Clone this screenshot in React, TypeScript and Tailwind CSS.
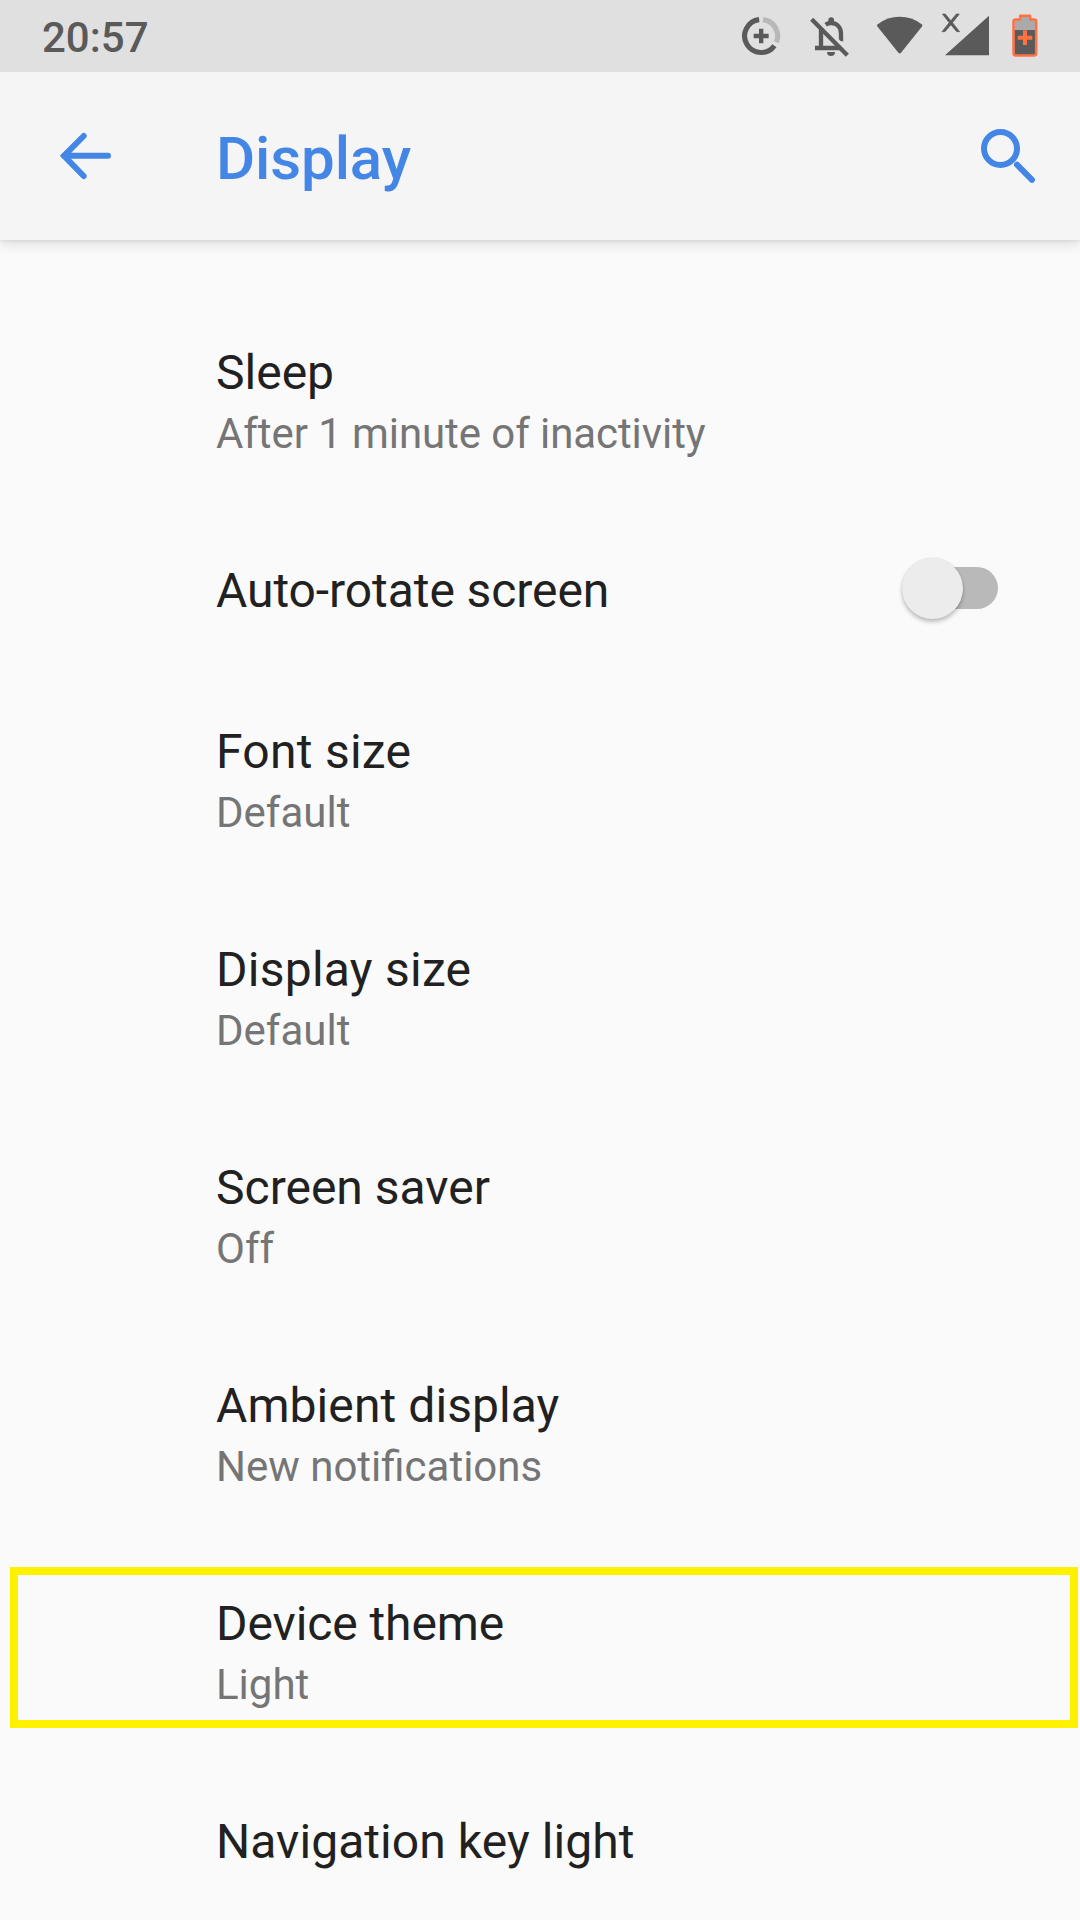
import React from 'react';

interface Setting {
  title: string;
  summary?: string;
  toggle?: boolean;
  highlighted?: boolean;
  titleClass?: string;
  summaryClass?: string;
}

const settings: Setting[] = [
  { title: 'Sleep', summary: 'After 1 minute of inactivity', summaryClass: 'tracking-[-0.08px]' },
  { title: 'Auto-rotate screen', toggle: true, titleClass: 'tracking-[-0.07px]' },
  { title: 'Font size', summary: 'Default', titleClass: 'tracking-[0.27px]' },
  { title: 'Display size', summary: 'Default', titleClass: 'tracking-[0.25px]' },
  { title: 'Screen saver', summary: 'Off' },
  { title: 'Ambient display', summary: 'New notifications', titleClass: 'tracking-[0.08px]' },
  { title: 'Device theme', summary: 'Light', titleClass: 'tracking-[-0.08px]', highlighted: true },
  { title: 'Navigation key light', titleClass: 'tracking-[0.06px]' },
];

const DataSaverIcon = () => (
  <svg viewBox="54 39 138 138" className="h-[46px] w-[46px]" fill="none" stroke="#5a5a5a" strokeWidth="15.500">
    <path d="M129 58.900A49.500 49.500 0 0 1 169.200 127" stroke="#b8b8b8" />
    <path d="M117.500 58.800A49.500 49.500 0 1 0 163.300 137.200" />
    <path d="M101 108H146M123.500 86V130" strokeWidth="13" />
  </svg>
);

const BellOffIcon = () => (
  <svg viewBox="252 0 150 216" className="h-[72px] w-[50px]" fill="none" stroke="#5a5a5a" strokeWidth="13">
    <path d="M303 88V143M285 144H362" />
    <path d="M317 74Q324 69 333 69C352 69 363 83 363 101V124" />
    <path d="M325 68V60A8.500 8.500 0 0 1 342 60V68Z" fill="#5a5a5a" stroke="none" />
    <path d="M321 156H345A12 12 0 0 1 321 156Z" fill="#5a5a5a" stroke="none" />
    {/* Cut-out that keeps the slash clear of the bell */}
    <path d="M284 51L390 158" stroke="#e0e0e0" strokeWidth="9" />
    <path d="M275 58L382 166" />
  </svg>
);

const WifiIcon = () => (
  <svg viewBox="874 0 52 72" className="h-[72px] w-[52px]" fill="#5a5a5a">
    <path d="M877.400 26.600Q876.500 25.200 877.800 24.200Q887.500 16.800 899.700 16.800Q911.900 16.800 921.600 24.200Q922.900 25.200 922 26.600L901 52.800Q899.700 54.200 898.400 52.800Z" />
  </svg>
);

const SignalIcon = () => (
  <svg viewBox="120 0 150 216" className="h-[72px] w-[50px]" fill="#5a5a5a">
    <path d="M267 47V166H135Z" />
    <path d="M127 42H136L152.500 62L169 42H178L157.500 68L179 95H170L152.500 74L135 95H126L147.500 68Z" stroke="#5a5a5a" strokeWidth="2" />
  </svg>
);

const BatteryIcon = () => (
  <svg viewBox="330 0 90 216" className="h-[72px] w-[30px]">
    <path d="M343 60H360V47H391V60H407V91H343Z" fill="#aaaaaa" />
    <path d="M343 90H407V165H343Z" fill="#5a5a5a" />
    <path d="M360.500 47H390.500V58.500H402Q408.500 58.500 408.500 65V160Q408.500 166.500 402 166.500H347Q340.500 166.500 340.500 160V65Q340.500 58.500 347 58.500H360.500Z" fill="none" stroke="#ff7043" strokeWidth="7.500" strokeLinejoin="round" />
    <path d="M353 113H397M375 91V135" fill="none" stroke="#ff7043" strokeWidth="12" />
  </svg>
);

const BackIcon = () => (
  <svg viewBox="174 390 168 156" className="h-[52px] w-[56px]" fill="none" stroke="#4486e5" strokeWidth="18" strokeLinecap="round">
    <path d="M324 467.500H193" />
    <path d="M251 408L192 467.500L251 528" strokeLinejoin="miter" />
  </svg>
);

const SearchIcon = () => (
  <svg viewBox="117 81 174 174" className="h-[58px] w-[58px]" fill="none" stroke="#4486e5" strokeWidth="18">
    <circle cx="181.500" cy="145.500" r="49.500" />
    <path d="M231 194L276 239.500" strokeLinecap="round" />
  </svg>
);

const Switch = () => (
  <div className="relative -mt-0.5 flex h-[61px] w-24 items-center self-start">
    <div className="ml-3 h-[42px] flex-1 rounded-full bg-[#b9b9b9]" />
    <div className="absolute left-0 top-px h-[61px] w-[61px] rounded-full bg-[#ececec] shadow-[0_3px_4px_rgba(0,0,0,0.24),0_0_2px_rgba(0,0,0,0.1)]" />
  </div>
);

const SettingRow: React.FC<Setting> = ({ title, summary, toggle, highlighted, titleClass = '', summaryClass = '' }) => (
  <div className={`relative flex shrink-0 items-center justify-between pt-12 pl-[216px] pr-[82px] ${toggle ? 'pb-[49px]' : 'pb-12'}`}>
    <div>
      <div className={`text-[48px] leading-[64px] text-[#212121] ${titleClass}`}>{title}</div>
      {summary && <div className={`text-[42px] leading-[58px] text-[#757575] ${summaryClass}`}>{summary}</div>}
    </div>
    {toggle && <Switch />}
    {highlighted && <div className="absolute left-[10px] top-[23px] h-[161px] w-[1068px] border-8 border-[#fff200]" />}
  </div>
);

export default function App() {
  return (
    <div className="flex h-[1920px] w-[1080px] flex-col overflow-hidden bg-[#fafafa] font-[Roboto,sans-serif]">
      <div className="z-20 flex h-[72px] shrink-0 items-center bg-[#e0e0e0] pl-[42px] pr-10">
        <span className="pt-[3px] text-[42px] font-medium leading-[69px] text-[#5a5a5a]">20:57</span>
        <div className="ml-auto flex items-center">
          <DataSaverIcon />
          <div className="ml-5"><BellOffIcon /></div>
          <div className="ml-5"><WifiIcon /></div>
          <div className="ml-3.5"><SignalIcon /></div>
          <div className="ml-5"><BatteryIcon /></div>
        </div>
      </div>

      <header className="z-10 flex h-[168px] shrink-0 items-center bg-[#f5f5f5] pl-[58px] pr-[43px] shadow-[0_3px_12px_rgba(0,0,0,0.14),0_1px_3px_rgba(0,0,0,0.06)]">
        <BackIcon />
        <h1 className="ml-[102px] mt-1.5 text-[60px] font-medium leading-[72px] tracking-[-0.1px] text-[#4486e5]">Display</h1>
        <div className="ml-auto"><SearchIcon /></div>
      </header>

      <main className="flex flex-col pt-[53px]">
        {settings.map((s) => (
          <SettingRow key={s.title} {...s} />
        ))}
      </main>
    </div>
  );
}
